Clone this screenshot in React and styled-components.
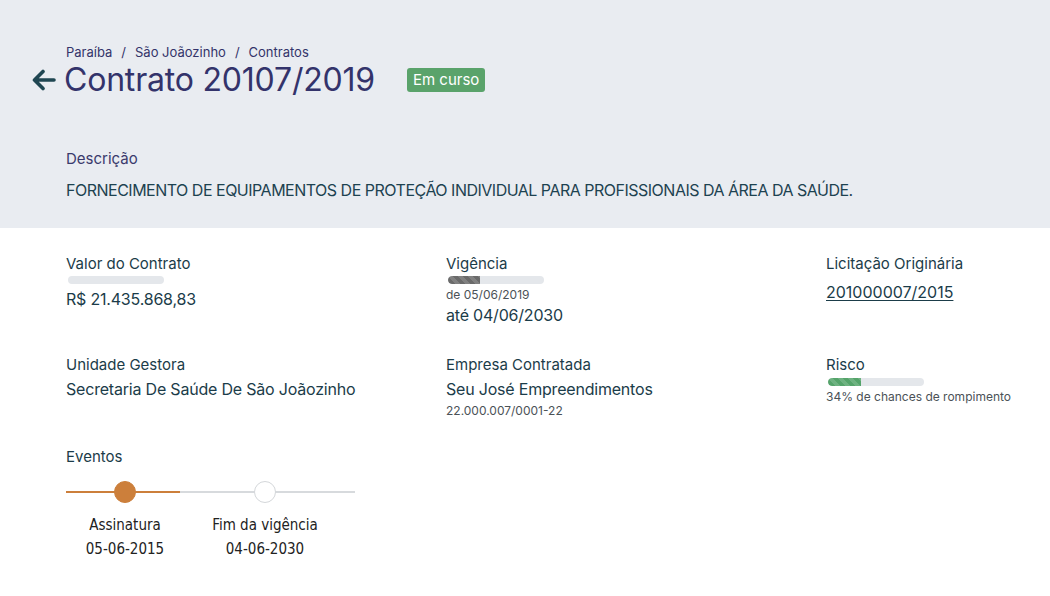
import styled, { createGlobalStyle } from 'styled-components';

const GlobalStyle = createGlobalStyle`
  body {
    margin: 0;
    background: #fff;
    font-family: Inter, "Noto Sans", sans-serif;
  }
`;

const events = [
  { name: 'Assinatura', date: '05-06-2015', done: true },
  { name: 'Fim da vigência', date: '04-06-2030', done: false },
];

function ArrowLeft() {
  return (
    <svg width="24" height="22" viewBox="0 0 24 22" fill="none">
      <path d="M22 11H3M11 2.5L2.5 11L11 19.5" stroke="#1f4652" strokeWidth="3.6" strokeLinecap="round" strokeLinejoin="round" />
    </svg>
  );
}

function App() {
  return (
    <>
      <GlobalStyle />
      <Header>
        <Breadcrumb>
          <span>Paraíba</span>
          <Sep>/</Sep>
          <span>São Joãozinho</span>
          <Sep>/</Sep>
          <span>Contratos</span>
        </Breadcrumb>
        <TitleRow>
          <BackButton aria-label="voltar">
            <ArrowLeft />
          </BackButton>
          <Title>Contrato 20107/2019</Title>
          <Badge>Em curso</Badge>
        </TitleRow>
        <DescLabel>Descrição</DescLabel>
        <DescText>FORNECIMENTO DE EQUIPAMENTOS DE PROTEÇÃO INDIVIDUAL PARA PROFISSIONAIS DA ÁREA DA SAÚDE.</DescText>
      </Header>

      <Body>
        <Grid>
          <Field>
            <Label>Valor do Contrato</Label>
            <Bar />
            <Value $gap={5}>R$ 21.435.868,83</Value>
          </Field>
          <Field>
            <Label>Vigência</Label>
            <Bar>
              <Fill $color="#6b6b6b" style={{ width: '33%' }} />
            </Bar>
            <Small $gap={3}>de 05/06/2019</Small>
            <Value $gap={2}>até 04/06/2030</Value>
          </Field>
          <Field>
            <Label>Licitação Originária</Label>
            <LinkValue href="#">201000007/2015</LinkValue>
          </Field>

          <Field>
            <Label>Unidade Gestora</Label>
            <Value $gap={4}>Secretaria De Saúde De São Joãozinho</Value>
          </Field>
          <Field>
            <Label>Empresa Contratada</Label>
            <Value $gap={4}>Seu José Empreendimentos</Value>
            <Small $gap={4}>22.000.007/0001-22</Small>
          </Field>
          <Field>
            <Label>Risco</Label>
            <Bar $gap={3}>
              <Fill $color="#55a46b" style={{ width: '34%' }} />
            </Bar>
            <Small $gap={3}>34% de chances de rompimento</Small>
          </Field>
        </Grid>

        <Events>
          <Label>Eventos</Label>
          <Steps>
            {events.map(ev => (
              <Step key={ev.name}>
                <Dot $done={ev.done} />
                <StepName>{ev.name}</StepName>
                <StepDate>{ev.date}</StepDate>
              </Step>
            ))}
          </Steps>
        </Events>
      </Body>
    </>
  );
}

export default App;

const Header = styled.header`
  background: #e9ecf1;
  padding: 44px 66px 27px;
`;

const Breadcrumb = styled.nav`
  display: flex;
  align-items: center;
  font-size: 13px;
  line-height: 16px;
  color: #34346a;
`;

const Sep = styled.span`
  margin: 0 9px;
`;

const TitleRow = styled.div`
  display: flex;
  align-items: center;
  margin: 1px 0 0 -34px;
  height: 38px;
`;

const BackButton = styled.button`
  display: flex;
  align-items: center;
  background: none;
  border: 0;
  padding: 0;
  margin-right: 8px;
  cursor: pointer;
`;

const Title = styled.h1`
  margin: 0;
  font-size: 32px;
  line-height: 38px;
  font-weight: 400;
  color: #33336b;
  letter-spacing: -0.2px;
`;

const Badge = styled.span`
  margin-left: 32px;
  margin-top: -1px;
  background: #5aa36b;
  color: #fff;
  font-size: 15px;
  line-height: 24px;
  padding: 0 6px;
  border-radius: 3px;
`;

const DescLabel = styled.div`
  margin-top: 50px;
  font-size: 15px;
  line-height: 20px;
  color: #3a3a6c;
`;

const DescText = styled.p`
  margin: 10px 0 0;
  font-size: 16px;
  line-height: 22px;
  letter-spacing: -0.5px;
  color: #1d4250;
`;

const Body = styled.main`
  padding: 26px 0 40px 66px;
`;

const Grid = styled.div`
  display: grid;
  grid-template-columns: 380px 380px max-content;
  row-gap: 30px;
`;

const Field = styled.div`
  display: flex;
  flex-direction: column;
  align-items: flex-start;
`;

const Label = styled.div`
  font-size: 15px;
  line-height: 20px;
  color: #1b3c49;
`;

const Value = styled.div`
  margin-top: ${p => p.$gap || 0}px;
  font-size: 16px;
  line-height: 20px;
  letter-spacing: -0.2px;
  color: #1b3c49;
`;

const LinkValue = styled.a`
  margin-top: 8px;
  font-size: 16px;
  line-height: 20px;
  color: #1b3c49;
  text-decoration: underline;
  text-underline-offset: 2px;
`;

const Small = styled.div`
  margin-top: ${p => p.$gap || 0}px;
  font-size: 12px;
  line-height: 16px;
  white-space: nowrap;
  color: #4b5257;
`;

const Bar = styled.div`
  margin-top: ${p => p.$gap || 2}px;
  margin-left: 2px;
  width: 96px;
  height: 8px;
  border-radius: 4px;
  background: #e4e7eb;
  overflow: hidden;
`;

const Fill = styled.div`
  height: 100%;
  border-radius: 4px 0 0 4px;
  background-color: ${p => p.$color};
  background-image: linear-gradient(
    45deg,
    rgba(255, 255, 255, 0.15) 25%,
    transparent 25%,
    transparent 50%,
    rgba(255, 255, 255, 0.15) 50%,
    rgba(255, 255, 255, 0.15) 75%,
    transparent 75%,
    transparent
  );
  background-size: 10px 10px;
`;

const Events = styled.section`
  margin-top: 28px;
`;

const Steps = styled.div`
  margin-top: 14px;
  width: 289px;
  display: flex;
  gap: 22px;
  background-image: linear-gradient(to right, #cc7f3b 114px, #d7dadd 114px);
  background-size: 100% 2px;
  background-position: 0 10px;
  background-repeat: no-repeat;
`;

const Step = styled.div`
  width: 118px;
  display: flex;
  flex-direction: column;
  align-items: center;
  font-family: "Liberation Sans Narrow", "DejaVu Sans Condensed", "Roboto", sans-serif;
  font-stretch: condensed;
  color: #222;
`;

const Dot = styled.span`
  width: 22px;
  height: 22px;
  box-sizing: border-box;
  border-radius: 50%;
  background: ${p => (p.$done ? '#cc7f3b' : '#fff')};
  border: 1px solid ${p => (p.$done ? '#cc7f3b' : '#d4d7da')};
`;

const StepName = styled.div`
  margin-top: 12px;
  font-size: 15px;
  line-height: 20px;
`;

const StepDate = styled.div`
  margin-top: 4px;
  font-size: 15px;
  line-height: 20px;
`;
